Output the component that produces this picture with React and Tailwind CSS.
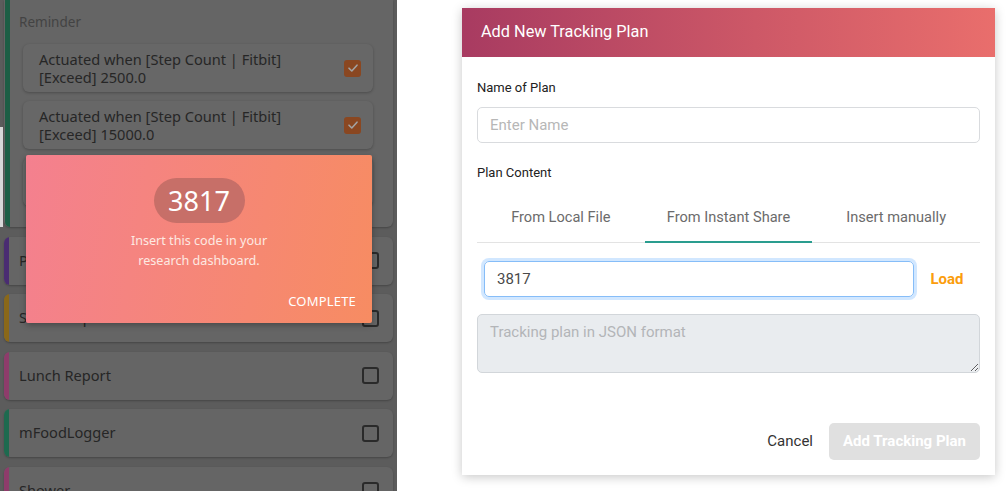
import React from "react";

const phoneFont = { fontFamily: '"Noto Sans", "DejaVu Sans", sans-serif' };
const webFont = { fontFamily: 'Roboto, "Liberation Sans", Arial, sans-serif' };

const reminders = [
  { id: 1, text: ["Actuated when [Step Count | Fitbit]", "[Exceed] 2500.0"] },
  { id: 2, text: ["Actuated when [Step Count | Fitbit]", "[Exceed] 15000.0"] },
  { id: 3, text: ["Actuated when [Step Count | Fitbit]", "[Exceed] 20000.0"] },
];

const trackers = [
  { id: "pre", name: "Pre-sleep Report", bar: "bg-[#4a2c72]" },
  { id: "status", name: "Status Report", bar: "bg-[#8a6819]" },
  { id: "lunch", name: "Lunch Report", bar: "bg-[#8e3c6b]" },
  { id: "food", name: "mFoodLogger", bar: "bg-[#1e6a4f]" },
  { id: "shower", name: "Shower", bar: "bg-[#8e3c6b]" },
];

const CheckedBox = () => (
  <div className="w-[17px] h-[17px] rounded-[3px] bg-[#8a4721] flex items-center justify-center shrink-0">
    <svg width="12" height="12" viewBox="0 0 12 12" fill="none">
      <path d="M2 6.2 4.8 9 10 3.2" stroke="#a3a3a3" strokeWidth="1.6" strokeLinecap="round" strokeLinejoin="round" />
    </svg>
  </div>
);

const EmptyBox = () => (
  <div className="w-[17px] h-[17px] rounded-[3px] border-2 border-[#2a2a2a] shrink-0" />
);

// dimmed phone screen with the share-code popup on top
const PhonePanel = () => (
  <div className="relative w-[397px] h-full bg-[#5c5c5c] pl-[4px] pr-[4px] shrink-0 overflow-hidden" style={phoneFont}>
    <div className="absolute left-0 top-[127px] w-[3px] h-[100px] bg-[#d8d8d8]" />

    <div className="flex flex-col gap-[9.5px]">
      {/* reminder card, top cut off */}
      <div className="flex rounded-b-[6px] bg-[#656565] shadow-[0_1px_2px_rgba(0,0,0,0.25)]">
        <div className="w-[5px] ml-[1px] bg-[#1d5e45] rounded-bl-[5px]" />
        <div className="flex-1 pl-[13px] pr-[20px] pt-[14px] pb-[21px]">
          <div className="-ml-[4px] text-[13.5px] leading-[16px] text-[#434343]">Reminder</div>
          <div className="mt-[14px] flex flex-col gap-[9px]">
            {reminders.map((r) => (
              <div
                key={r.id}
                className="h-[48px] rounded-[6px] bg-[#676767] shadow-[0_1px_3px_rgba(0,0,0,0.25)] flex items-center pl-[16px] pr-[12px]"
              >
                <div className="flex-1 text-[14.6px] leading-[18px] text-[#262626]">
                  <div>{r.text[0]}</div>
                  <div>{r.text[1]}</div>
                </div>
                <CheckedBox />
              </div>
            ))}
          </div>
        </div>
      </div>

      {trackers.map((t) => (
        <div
          key={t.id}
          className="h-[48px] flex rounded-[6px] bg-[#656565] shadow-[0_1px_2px_rgba(0,0,0,0.25)] overflow-hidden shrink-0"
        >
          <div className={`w-[5px] ${t.bar}`} />
          <div className="flex-1 flex items-center pl-[10px] pr-[14px]">
            <span className="flex-1 text-[14.6px] text-[#262626]">{t.name}</span>
            <EmptyBox />
          </div>
        </div>
      ))}
    </div>

    <div className="absolute left-[26px] top-[155px] w-[346px] h-[168px] rounded-[2px] bg-[linear-gradient(100deg,#f4808f,#f78c62)] shadow-[0_2px_6px_rgba(0,0,0,0.3)] flex flex-col items-center">
      <div className="mt-[23px] w-[91px] h-[45px] rounded-full bg-[#c76f68] flex items-center justify-center text-white text-[27px] leading-none">
        3817
      </div>
      <div className="mt-[8px] text-center text-[12.6px] leading-[19.5px] text-[#fde9e2]">
        <div>Insert this code in your</div>
        <div>research dashboard.</div>
      </div>
      <div className="self-end mt-[22px] mr-[16px] text-[13px] text-white tracking-[0.2px]">COMPLETE</div>
    </div>
  </div>
);

const tabs = ["From Local File", "From Instant Share", "Insert manually"];

const TrackingPlanModal = () => {
  const activeTab = 1;
  return (
    <div
      className="mt-[8px] ml-[65px] w-[533px] h-[467px] bg-white shadow-[0_2px_10px_rgba(0,0,0,0.22)] flex flex-col"
      style={webFont}
    >
      <div className="h-[49px] flex items-center pl-[19px] bg-[linear-gradient(90deg,#a83b61,#cd5867_55%,#e96e6c)]">
        <span className="text-white text-[16.3px]">Add New Tracking Plan</span>
      </div>

      <div className="flex-1 flex flex-col px-[15px]">
        <div className="mt-[23px] text-[13px] leading-[16px] text-[#222]">Name of Plan</div>
        <input
          readOnly
          placeholder="Enter Name"
          className="mt-[11px] h-[36px] w-full rounded-[5px] border border-[#d9dbde] px-[12px] text-[15px] text-[#555] placeholder:text-[#b7b7b7] outline-none"
        />

        <div className="mt-[22px] text-[13px] leading-[16px] text-[#222]">Plan Content</div>

        <div className="mt-[14px] grid grid-cols-3 border-b border-[#e3e3e3]">
          {tabs.map((t, i) => (
            <div
              key={t}
              className={`h-[48px] flex items-center justify-center text-[14.6px] text-[#6b6b6b] border-b-2 -mb-px ${
                i === activeTab ? "border-[#2a9d8f]" : "border-transparent"
              }`}
            >
              {t}
            </div>
          ))}
        </div>

        <div className="mt-[18px] flex items-center pl-[7px]">
          <input
            readOnly
            value="3817"
            className="flex-1 h-[36px] rounded-[5px] border border-[#86bdf8] shadow-[0_0_0_3px_rgba(0,123,255,0.18)] px-[12px] text-[15px] text-[#4a4a4a] outline-none"
          />
          <button className="w-[66px] text-center text-[15px] font-bold text-[#fb9d0c]">Load</button>
        </div>

        <textarea
          disabled
          placeholder="Tracking plan in JSON format"
          className="mt-[17px] h-[59px] w-full rounded-[5px] border border-[#d2d6da] bg-[#e9ecef] px-[12px] py-[7px] text-[15px] leading-[20px] placeholder:text-[#b3b5b8] outline-none"
        />

        <div className="mt-[50px] flex items-center justify-end gap-[16px]">
          <button className="text-[15px] text-[#333]">Cancel</button>
          <button className="w-[151px] h-[37px] rounded-[5px] bg-[#e0e0e0] text-white text-[15px] font-bold">
            Add Tracking Plan
          </button>
        </div>
      </div>
    </div>
  );
};

export default function App() {
  return (
    <div className="w-[1006px] h-[491px] flex bg-white overflow-hidden">
      <PhonePanel />
      <TrackingPlanModal />
    </div>
  );
}
